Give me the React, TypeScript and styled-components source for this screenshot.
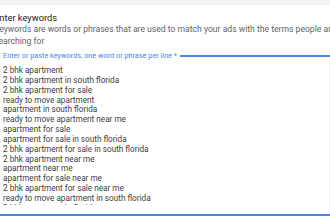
import React from "react";
import styled, { createGlobalStyle } from "styled-components";

const Global = createGlobalStyle`
  html, body { margin: 0; padding: 0; background: #ffffff; }
  body { width: 330px; height: 220px; overflow: hidden; font-family: Roboto, "Liberation Sans", sans-serif; }
`;

const Page = styled.div`
  width: 330px;
  height: 220px;
  overflow: hidden;
  display: flex;
  flex-direction: column;
`;

const TopBand = styled.div`
  height: 5px;
  background: #f3f3f3;
  flex: none;
`;

const Section = styled.div`
  margin-left: -6px;
  padding-top: 7px;
  display: flex;
  flex-direction: column;
  white-space: nowrap;
`;

const Heading = styled.div`
  font-size: 9.3px;
  line-height: 11px;
  color: #202124;
`;

const Description = styled.div`
  font-size: 8.6px;
  line-height: 12px;
  color: #5f6368;
  white-space: normal;
  width: 365px;
`;

const Field = styled.div`
  margin-top: 4px;
  margin-left: 9px;
  width: 327px;
  display: flex;
  flex-direction: column;
`;

const LabelRow = styled.div`
  display: flex;
  align-items: center;
  gap: 3px;
`;

const Label = styled.span`
  font-size: 7.3px;
  line-height: 10px;
  color: #4a86e8;
`;

const Line = styled.div`
  flex: 1;
  height: 2px;
  background: #4a86e8;
`;

const Body = styled.div`
  padding-top: 5px;
  padding-bottom: 9px;
  border-right: 1px solid #f0f0f0;
`;

const List = styled.div`
  height: 139px;
  overflow: hidden;
`;

const Keyword = styled.div`
  font-size: 8.2px;
  line-height: 9.85px;
  color: #3c4043;
`;

const Bottom = styled.div`
  height: 2px;
  background: #4a86e8;
  margin-left: -9px;
  margin-right: -10px;
`;

const keywords = [
  "2 bhk apartment",
  "2 bhk apartment in south florida",
  "2 bhk apartment for sale",
  "ready to move apartment",
  "apartment in south florida",
  "ready to move apartment near me",
  "apartment for sale",
  "apartment for sale in south florida",
  "2 bhk apartment for sale in south florida",
  "2 bhk apartment near me",
  "apartment near me",
  "apartment for sale near me",
  "2 bhk apartment for sale near me",
  "ready to move apartment in south florida",
  "2 bhk apartment in florida",
];

export default function App() {
  return (
    <Page>
      <Global />
      <TopBand />
      <Section>
        <Heading>Enter keywords</Heading>
        <Description>
          Keywords are words or phrases that are used to match your ads with the terms people are searching for
        </Description>
        <Field>
          <LabelRow>
            <Label>Enter or paste keywords, one word or phrase per line *</Label>
            <Line />
          </LabelRow>
          <Body>
            <List>
              {keywords.map((k) => (
                <Keyword key={k}>{k}</Keyword>
              ))}
            </List>
          </Body>
          <Bottom />
        </Field>
      </Section>
    </Page>
  );
}
